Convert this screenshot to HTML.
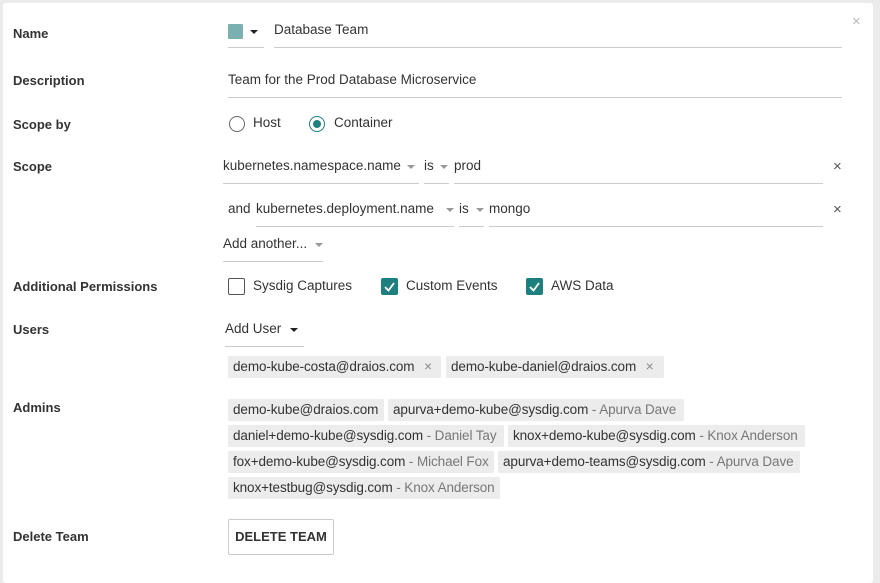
<!DOCTYPE html>
<html><head><meta charset="utf-8"><style>
*{margin:0;padding:0;box-sizing:border-box}
body{width:880px;height:570px;background:#ebebeb;font-family:"Liberation Sans",sans-serif;font-size:13.5px;color:#333;position:relative;overflow:hidden}
#p{position:absolute;left:3px;top:3px;width:870px;height:580px;background:#fff;border-radius:3px}
.a{position:absolute;white-space:nowrap}
.l{font-weight:bold;color:#333;left:13px;font-size:13px}
.u{position:absolute;height:1px;background:#ccc}
.tri{position:absolute;width:0;height:0;border-left:4px solid transparent;border-right:4px solid transparent;border-top:4px solid #999}
.tag{position:absolute;height:22px;background:#ececec;border-radius:2px;line-height:22px;padding-left:5px;white-space:nowrap;overflow:hidden;font-size:13.5px;letter-spacing:-0.1px}
.tag i{font-style:normal;color:#777}
.x{position:absolute;color:#555;font-size:15px}
.cb{position:absolute;width:17px;height:17px;border-radius:2px}
</style></head><body>
<div id="p"></div>
<div class="a" style="left:852px;top:13px;color:#bbb;font-size:15px">×</div>

<div class="a l" style="top:26px">Name</div>
<div style="position:absolute;left:228px;top:24px;width:15px;height:15px;background:#7ab0b0;border-radius:1px"></div>
<span class="tri" style="left:250px;top:30px;border-top-color:#222"></span>
<div class="u" style="left:228px;top:47px;width:36px"></div>
<div class="a" style="left:274px;top:22px">Database Team</div>
<div class="u" style="left:274px;top:47px;width:568px"></div>

<div class="a l" style="top:73px">Description</div>
<div class="a" style="left:228px;top:72px">Team for the Prod Database Microservice</div>
<div class="u" style="left:228px;top:97px;width:614px"></div>

<div class="a l" style="top:117px">Scope by</div>
<div style="position:absolute;left:229px;top:116px;width:16px;height:16px;border:1.5px solid #666;border-radius:50%"></div>
<div class="a" style="left:253px;top:115px">Host</div>
<div style="position:absolute;left:309px;top:116px;width:16px;height:16px;border:1.5px solid #1e7f7f;border-radius:50%"></div>
<div style="position:absolute;left:313px;top:120px;width:8px;height:8px;background:#1e7f7f;border-radius:50%"></div>
<div class="a" style="left:334px;top:115px">Container</div>

<div class="a l" style="top:159px">Scope</div>
<div class="a" style="left:223px;top:158px">kubernetes.namespace.name</div>
<span class="tri" style="left:407px;top:165px"></span>
<div class="u" style="left:223px;top:183px;width:196px"></div>
<div class="a" style="left:424px;top:158px">is</div>
<span class="tri" style="left:440px;top:165px"></span>
<div class="u" style="left:424px;top:183px;width:25px"></div>
<div class="a" style="left:454px;top:158px">prod</div>
<div class="u" style="left:454px;top:183px;width:369px"></div>
<div class="x" style="left:833px;top:158px">×</div>

<div class="a" style="left:228px;top:201px">and</div>
<div class="a" style="left:256px;top:201px">kubernetes.deployment.name</div>
<span class="tri" style="left:446px;top:208px"></span>
<div class="u" style="left:256px;top:226px;width:198px"></div>
<div class="a" style="left:459px;top:201px">is</div>
<span class="tri" style="left:476px;top:208px"></span>
<div class="u" style="left:459px;top:226px;width:25px"></div>
<div class="a" style="left:489px;top:201px">mongo</div>
<div class="u" style="left:489px;top:226px;width:334px"></div>
<div class="x" style="left:833px;top:201px">×</div>

<div class="a" style="left:223px;top:236px">Add another...</div>
<span class="tri" style="left:315px;top:243px"></span>
<div class="u" style="left:223px;top:261px;width:100px"></div>

<div class="a l" style="top:279px">Additional Permissions</div>
<div class="cb" style="left:228px;top:278px;border:1.5px solid #555"></div>
<div class="a" style="left:253px;top:278px">Sysdig Captures</div>
<div class="cb" style="left:381px;top:278px;background:#1e7f7f"><svg width="17" height="17"><path d="M4 9 L7.5 12.5 L13 5" stroke="#fff" stroke-width="1.8" fill="none"/></svg></div>
<div class="a" style="left:406px;top:278px">Custom Events</div>
<div class="cb" style="left:526px;top:278px;background:#1e7f7f"><svg width="17" height="17"><path d="M4 9 L7.5 12.5 L13 5" stroke="#fff" stroke-width="1.8" fill="none"/></svg></div>
<div class="a" style="left:551px;top:278px">AWS Data</div>

<div class="a l" style="top:322px">Users</div>
<div class="a" style="left:225px;top:321px">Add User</div>
<span class="tri" style="left:290px;top:328px;border-top-color:#222"></span>
<div class="u" style="left:225px;top:346px;width:79px"></div>
<div class="tag" style="left:228px;top:356px;width:213px">demo-kube-costa@draios.com <span style="color:#888;margin-left:6px">×</span></div>
<div class="tag" style="left:446px;top:356px;width:218px">demo-kube-daniel@draios.com <span style="color:#888;margin-left:6px">×</span></div>

<div class="a l" style="top:400px">Admins</div>
<div class="tag" style="left:228px;top:399px;width:156px">demo-kube@draios.com</div>
<div class="tag" style="left:388px;top:399px;width:296px">apurva+demo-kube@sysdig.com <i>- Apurva Dave</i></div>
<div class="tag" style="left:228px;top:425px;width:276px">daniel+demo-kube@sysdig.com <i>- Daniel Tay</i></div>
<div class="tag" style="left:508px;top:425px;width:297px">knox+demo-kube@sysdig.com <i>- Knox Anderson</i></div>
<div class="tag" style="left:228px;top:451px;width:266px">fox+demo-kube@sysdig.com <i>- Michael Fox</i></div>
<div class="tag" style="left:498px;top:451px;width:302px">apurva+demo-teams@sysdig.com <i>- Apurva Dave</i></div>
<div class="tag" style="left:228px;top:477px;width:272px">knox+testbug@sysdig.com <i>- Knox Anderson</i></div>

<div class="a l" style="top:529px">Delete Team</div>
<div style="position:absolute;left:228px;top:519px;width:106px;height:36px;border:1px solid #ccc;border-radius:2px;font-weight:bold;line-height:34px;text-align:center;color:#333;font-size:13px">DELETE TEAM</div>
</body></html>
